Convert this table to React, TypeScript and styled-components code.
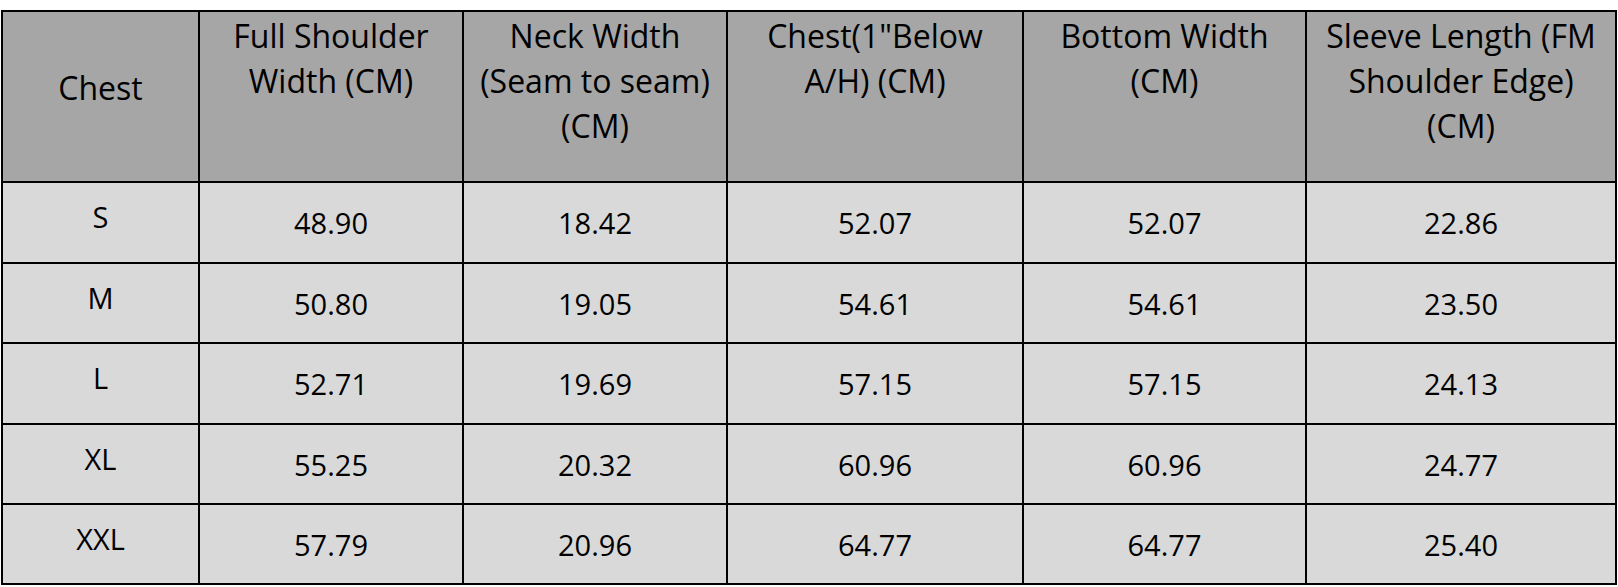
import React from "react";
import styled, { createGlobalStyle } from "styled-components";

const GlobalStyle = createGlobalStyle`
  html, body {
    margin: 0;
    padding: 0;
    background: #ffffff;
  }
  body {
    font-family: "Open Sans", "Liberation Sans", sans-serif;
    color: #000000;
  }
`;

// header lines are broken the same way as in the sheet
const headers: string[][] = [
  ["Chest"],
  ["Full Shoulder", "Width (CM)"],
  ["Neck Width", "(Seam to seam)", "(CM)"],
  ['Chest(1"Below', "A/H) (CM)"],
  ["Bottom Width", "(CM)"],
  ["Sleeve Length (FM", "Shoulder Edge)", "(CM)"],
];

const rows: string[][] = [
  ["S", "48.90", "18.42", "52.07", "52.07", "22.86"],
  ["M", "50.80", "19.05", "54.61", "54.61", "23.50"],
  ["L", "52.71", "19.69", "57.15", "57.15", "24.13"],
  ["XL", "55.25", "20.32", "60.96", "60.96", "24.77"],
  ["XXL", "57.79", "20.96", "64.77", "64.77", "25.40"],
];

const App: React.FC = () => {
  return (
    <>
      <GlobalStyle />
      <Page>
        <Grid>
          {headers.map((lines, i) => (
            <HeadCell key={lines.join(" ")} $first={i === 0}>
              <HeadText>
                {lines.map((l) => (
                  <Line key={l}>{l}</Line>
                ))}
              </HeadText>
            </HeadCell>
          ))}
          {rows.map((row) =>
            row.map((v, i) => (
              <Cell key={row[0] + i} $first={i === 0}>
                {v}
              </Cell>
            ))
          )}
        </Grid>
      </Page>
    </>
  );
};

export default App;

const Page = styled.div`
  padding: 10px 2px 0 1px;
`;

const Grid = styled.div`
  display: grid;
  grid-template-columns: 195px 262px 262px 294px 281px 308px;
  grid-template-rows: 169px 79px 78px 79px 78px 78px;
  gap: 2px;
  padding: 2px;
  background: #000000;
  width: max-content;
`;

const HeadCell = styled.div<{ $first: boolean }>`
  background: #a6a6a6;
  display: flex;
  justify-content: center;
  align-items: ${(p) => (p.$first ? "center" : "flex-start")};
  padding: ${(p) => (p.$first ? "0 0 18px 0" : "1px 0 0 0")};
`;

const HeadText = styled.div`
  font-size: 32px;
  line-height: 45px;
  text-align: center;
`;

const Line = styled.span`
  display: block;
  white-space: nowrap;
`;

const Cell = styled.div<{ $first: boolean }>`
  background: #d9d9d9;
  display: flex;
  justify-content: center;
  align-items: center;
  font-size: 29px;
  padding-bottom: ${(p) => (p.$first ? "12px" : "0")};
`;
